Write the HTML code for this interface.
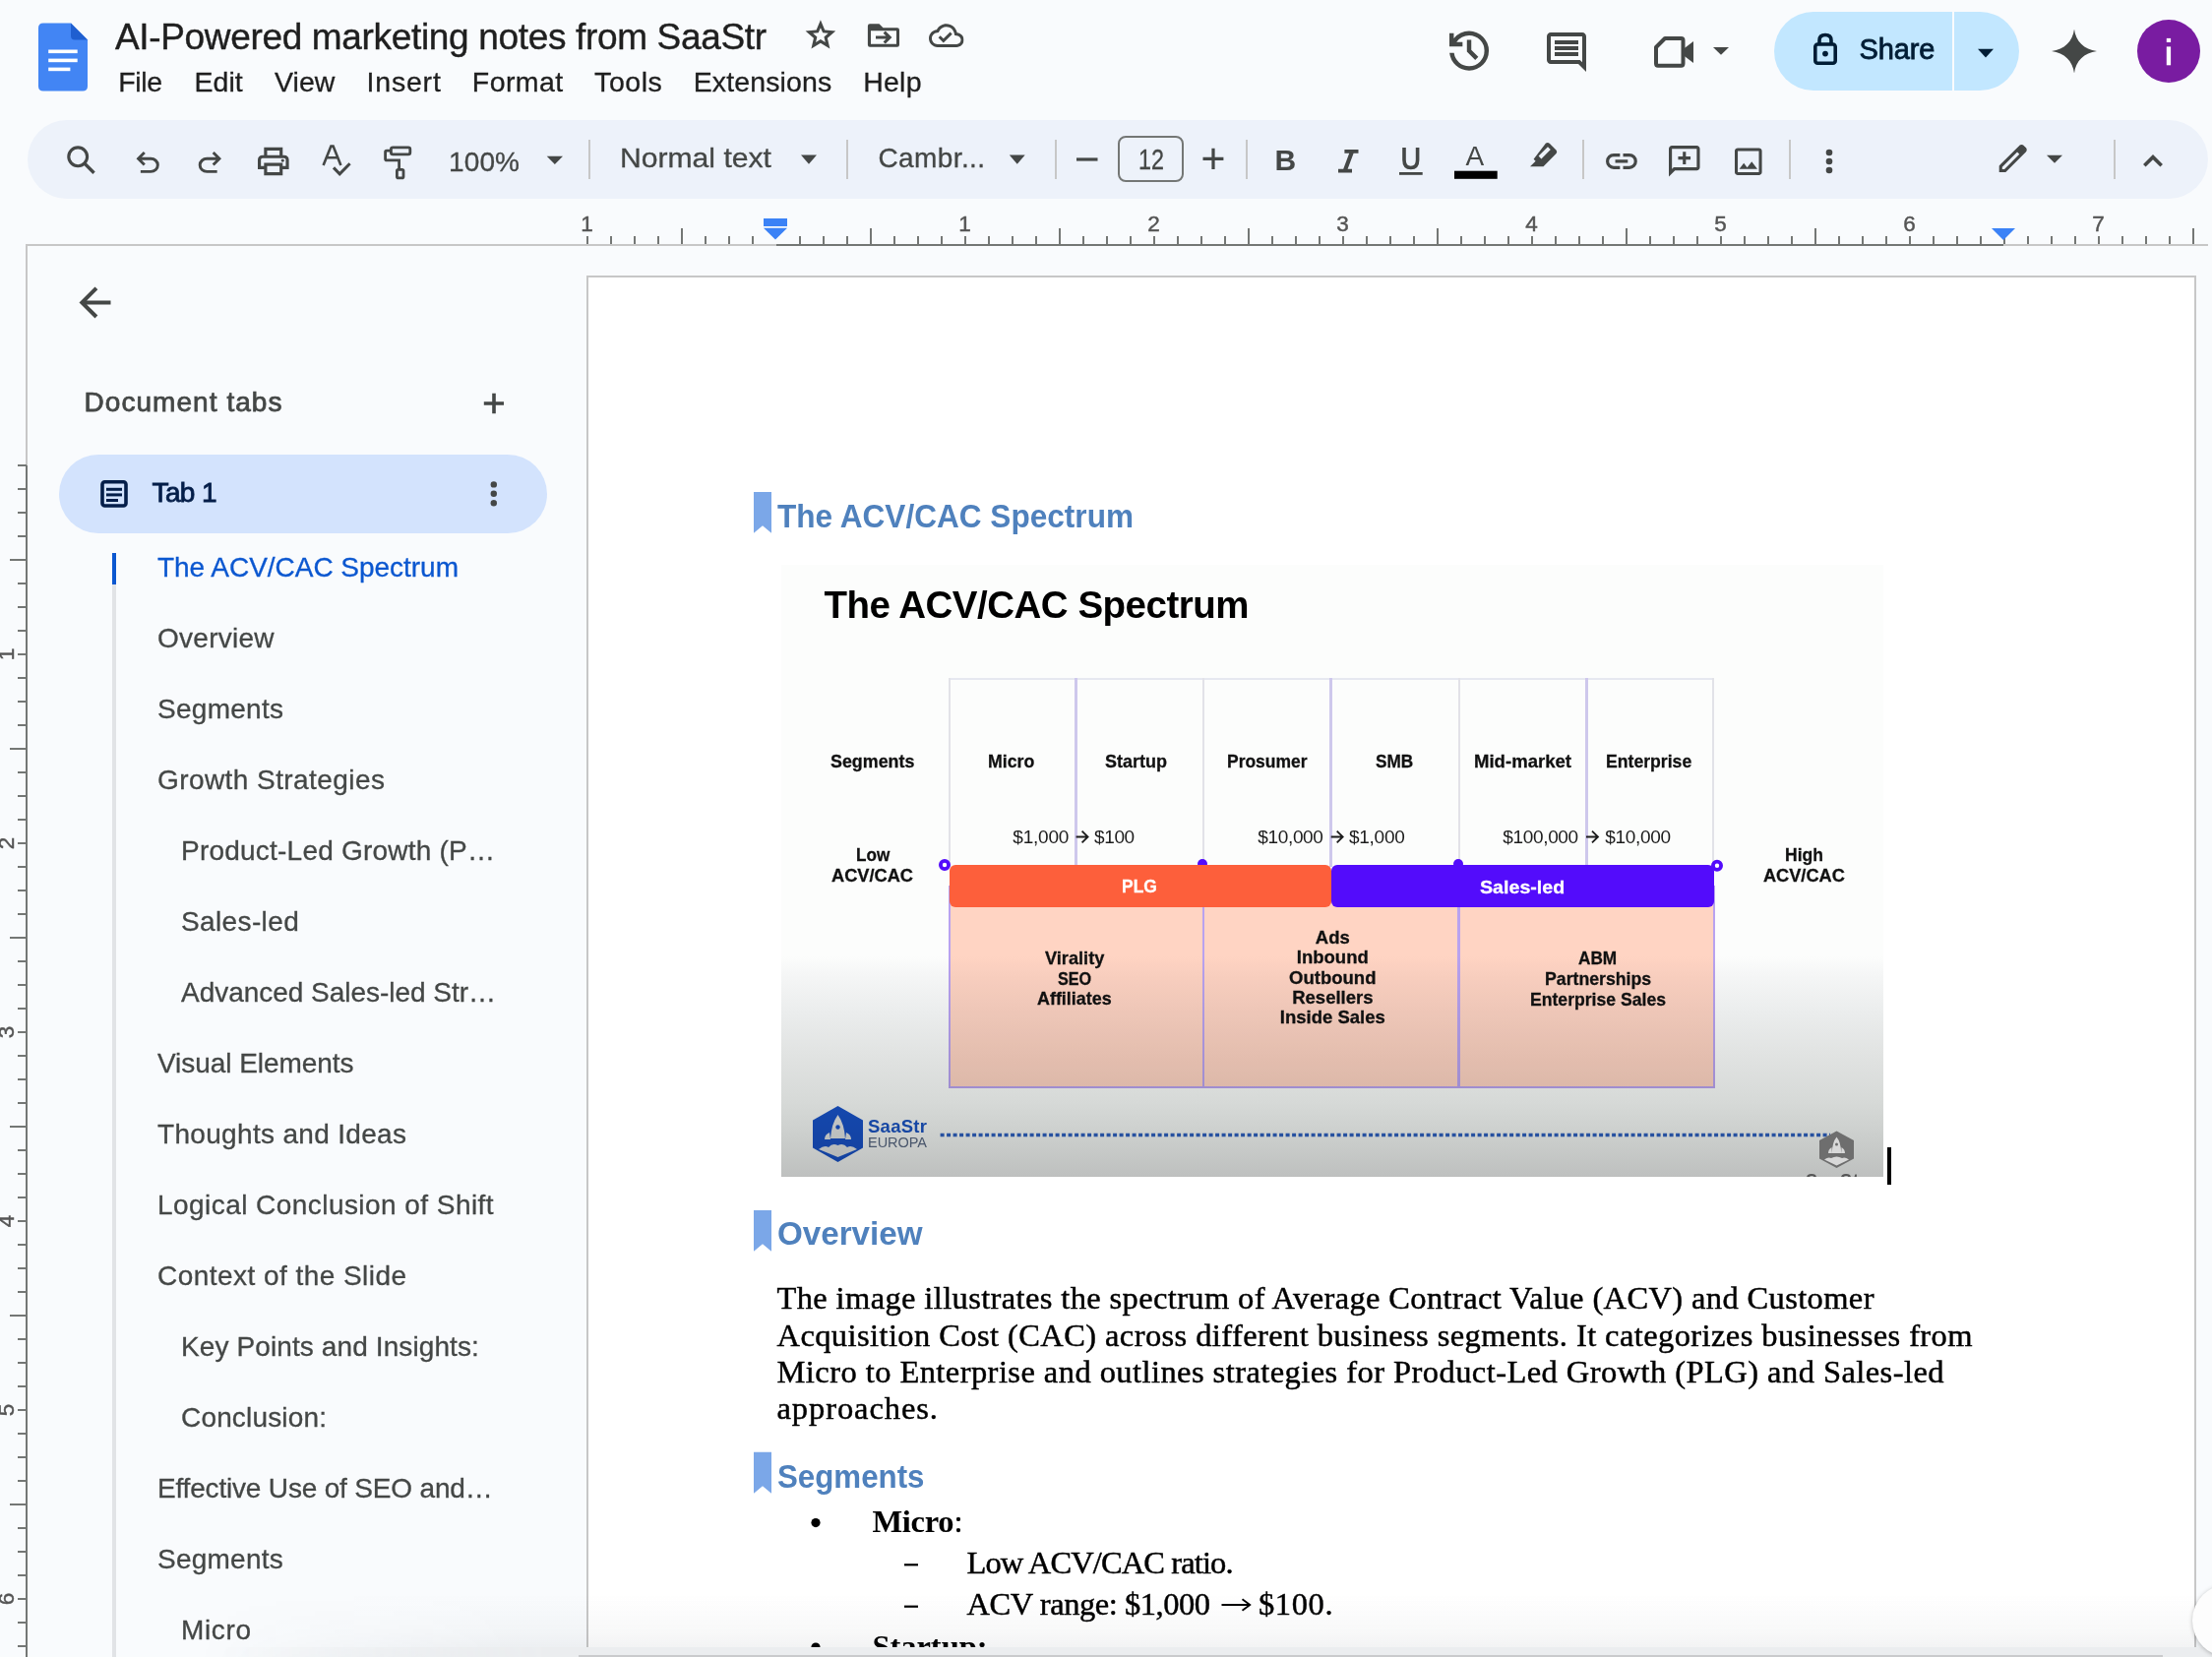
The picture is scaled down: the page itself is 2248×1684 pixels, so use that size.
<!DOCTYPE html>
<html><head><meta charset="utf-8">
<style>
html,body{margin:0;padding:0;}
body{width:2248px;height:1684px;position:relative;overflow:hidden;background:#f9fbfd;font-family:"Liberation Sans",sans-serif;}
.t{position:absolute;white-space:pre;line-height:1;}
.a{position:absolute;}
svg.a{overflow:visible;}
</style></head><body>
<div class=a style='left:1803px;top:12px;width:249px;height:80px;border-radius:40px;background:#c2e7ff'></div>
<div class=a style='left:1984px;top:12px;width:2px;height:80px;background:#f9fbfd'></div>
<div class=a style='left:28px;top:122px;width:2216px;height:80px;border-radius:40px;background:#edf2fa'></div>
<div class=a style='left:598px;top:142px;width:2px;height:40px;background:#c7c7c7'></div>
<div class=a style='left:859.7px;top:142px;width:2px;height:40px;background:#c7c7c7'></div>
<div class=a style='left:1071.8px;top:142px;width:2px;height:40px;background:#c7c7c7'></div>
<div class=a style='left:1265.5px;top:142px;width:2px;height:40px;background:#c7c7c7'></div>
<div class=a style='left:1608px;top:142px;width:2px;height:40px;background:#c7c7c7'></div>
<div class=a style='left:1818px;top:142px;width:2px;height:40px;background:#c7c7c7'></div>
<div class=a style='left:2148px;top:142px;width:2px;height:40px;background:#c7c7c7'></div>
<div class=a style='left:1136.4px;top:138.4px;width:63px;height:43px;border:2px solid #747775;border-radius:8px'></div>
<div class=a style='left:27px;top:247.5px;width:762px;height:2px;background:#c7c7c7'></div>
<div class=a style='left:789px;top:247.5px;width:1247px;height:2px;background:#747775'></div>
<div class=a style='left:2036px;top:247.5px;width:208px;height:2px;background:#c7c7c7'></div>
<div class=a style='left:596px;top:239.8px;width:2px;height:8.699999999999989px;background:#747775'></div>
<div class=a style='left:620px;top:239.8px;width:2px;height:8.699999999999989px;background:#747775'></div>
<div class=a style='left:644px;top:239.8px;width:2px;height:8.699999999999989px;background:#747775'></div>
<div class=a style='left:668px;top:239.8px;width:2px;height:8.699999999999989px;background:#747775'></div>
<div class=a style='left:692px;top:231.8px;width:2px;height:16.69999999999999px;background:#747775'></div>
<div class=a style='left:716px;top:239.8px;width:2px;height:8.699999999999989px;background:#747775'></div>
<div class=a style='left:740px;top:239.8px;width:2px;height:8.699999999999989px;background:#747775'></div>
<div class=a style='left:764px;top:239.8px;width:2px;height:8.699999999999989px;background:#747775'></div>
<div class=a style='left:812px;top:239.8px;width:2px;height:8.699999999999989px;background:#747775'></div>
<div class=a style='left:836px;top:239.8px;width:2px;height:8.699999999999989px;background:#747775'></div>
<div class=a style='left:860px;top:239.8px;width:2px;height:8.699999999999989px;background:#747775'></div>
<div class=a style='left:884px;top:231.8px;width:2px;height:16.69999999999999px;background:#747775'></div>
<div class=a style='left:908px;top:239.8px;width:2px;height:8.699999999999989px;background:#747775'></div>
<div class=a style='left:932px;top:239.8px;width:2px;height:8.699999999999989px;background:#747775'></div>
<div class=a style='left:956px;top:239.8px;width:2px;height:8.699999999999989px;background:#747775'></div>
<div class=a style='left:980px;top:239.8px;width:2px;height:8.699999999999989px;background:#747775'></div>
<div class=a style='left:1004px;top:239.8px;width:2px;height:8.699999999999989px;background:#747775'></div>
<div class=a style='left:1028px;top:239.8px;width:2px;height:8.699999999999989px;background:#747775'></div>
<div class=a style='left:1052px;top:239.8px;width:2px;height:8.699999999999989px;background:#747775'></div>
<div class=a style='left:1076px;top:231.8px;width:2px;height:16.69999999999999px;background:#747775'></div>
<div class=a style='left:1100px;top:239.8px;width:2px;height:8.699999999999989px;background:#747775'></div>
<div class=a style='left:1124px;top:239.8px;width:2px;height:8.699999999999989px;background:#747775'></div>
<div class=a style='left:1148px;top:239.8px;width:2px;height:8.699999999999989px;background:#747775'></div>
<div class=a style='left:1172px;top:239.8px;width:2px;height:8.699999999999989px;background:#747775'></div>
<div class=a style='left:1196px;top:239.8px;width:2px;height:8.699999999999989px;background:#747775'></div>
<div class=a style='left:1220px;top:239.8px;width:2px;height:8.699999999999989px;background:#747775'></div>
<div class=a style='left:1244px;top:239.8px;width:2px;height:8.699999999999989px;background:#747775'></div>
<div class=a style='left:1268px;top:231.8px;width:2px;height:16.69999999999999px;background:#747775'></div>
<div class=a style='left:1292px;top:239.8px;width:2px;height:8.699999999999989px;background:#747775'></div>
<div class=a style='left:1316px;top:239.8px;width:2px;height:8.699999999999989px;background:#747775'></div>
<div class=a style='left:1340px;top:239.8px;width:2px;height:8.699999999999989px;background:#747775'></div>
<div class=a style='left:1364px;top:239.8px;width:2px;height:8.699999999999989px;background:#747775'></div>
<div class=a style='left:1388px;top:239.8px;width:2px;height:8.699999999999989px;background:#747775'></div>
<div class=a style='left:1412px;top:239.8px;width:2px;height:8.699999999999989px;background:#747775'></div>
<div class=a style='left:1436px;top:239.8px;width:2px;height:8.699999999999989px;background:#747775'></div>
<div class=a style='left:1460px;top:231.8px;width:2px;height:16.69999999999999px;background:#747775'></div>
<div class=a style='left:1484px;top:239.8px;width:2px;height:8.699999999999989px;background:#747775'></div>
<div class=a style='left:1508px;top:239.8px;width:2px;height:8.699999999999989px;background:#747775'></div>
<div class=a style='left:1532px;top:239.8px;width:2px;height:8.699999999999989px;background:#747775'></div>
<div class=a style='left:1556px;top:239.8px;width:2px;height:8.699999999999989px;background:#747775'></div>
<div class=a style='left:1580px;top:239.8px;width:2px;height:8.699999999999989px;background:#747775'></div>
<div class=a style='left:1604px;top:239.8px;width:2px;height:8.699999999999989px;background:#747775'></div>
<div class=a style='left:1628px;top:239.8px;width:2px;height:8.699999999999989px;background:#747775'></div>
<div class=a style='left:1652px;top:231.8px;width:2px;height:16.69999999999999px;background:#747775'></div>
<div class=a style='left:1676px;top:239.8px;width:2px;height:8.699999999999989px;background:#747775'></div>
<div class=a style='left:1700px;top:239.8px;width:2px;height:8.699999999999989px;background:#747775'></div>
<div class=a style='left:1724px;top:239.8px;width:2px;height:8.699999999999989px;background:#747775'></div>
<div class=a style='left:1748px;top:239.8px;width:2px;height:8.699999999999989px;background:#747775'></div>
<div class=a style='left:1772px;top:239.8px;width:2px;height:8.699999999999989px;background:#747775'></div>
<div class=a style='left:1796px;top:239.8px;width:2px;height:8.699999999999989px;background:#747775'></div>
<div class=a style='left:1820px;top:239.8px;width:2px;height:8.699999999999989px;background:#747775'></div>
<div class=a style='left:1844px;top:231.8px;width:2px;height:16.69999999999999px;background:#747775'></div>
<div class=a style='left:1868px;top:239.8px;width:2px;height:8.699999999999989px;background:#747775'></div>
<div class=a style='left:1892px;top:239.8px;width:2px;height:8.699999999999989px;background:#747775'></div>
<div class=a style='left:1916px;top:239.8px;width:2px;height:8.699999999999989px;background:#747775'></div>
<div class=a style='left:1940px;top:239.8px;width:2px;height:8.699999999999989px;background:#747775'></div>
<div class=a style='left:1964px;top:239.8px;width:2px;height:8.699999999999989px;background:#747775'></div>
<div class=a style='left:1988px;top:239.8px;width:2px;height:8.699999999999989px;background:#747775'></div>
<div class=a style='left:2012px;top:239.8px;width:2px;height:8.699999999999989px;background:#747775'></div>
<div class=a style='left:2036px;top:231.8px;width:2px;height:16.69999999999999px;background:#747775'></div>
<div class=a style='left:2060px;top:239.8px;width:2px;height:8.699999999999989px;background:#747775'></div>
<div class=a style='left:2084px;top:239.8px;width:2px;height:8.699999999999989px;background:#747775'></div>
<div class=a style='left:2108px;top:239.8px;width:2px;height:8.699999999999989px;background:#747775'></div>
<div class=a style='left:2132px;top:239.8px;width:2px;height:8.699999999999989px;background:#747775'></div>
<div class=a style='left:2156px;top:239.8px;width:2px;height:8.699999999999989px;background:#747775'></div>
<div class=a style='left:2180px;top:239.8px;width:2px;height:8.699999999999989px;background:#747775'></div>
<div class=a style='left:2204px;top:239.8px;width:2px;height:8.699999999999989px;background:#747775'></div>
<div class=a style='left:2228px;top:231.8px;width:2px;height:16.69999999999999px;background:#747775'></div>
<div class=a style='left:776px;top:221.9px;width:24px;height:8px;background:#3b82f6'></div>
<div class=a style='left:26px;top:248px;width:2px;height:225px;background:#c7c7c7'></div>
<div class=a style='left:26px;top:473px;width:2px;height:1211px;background:#747775'></div>
<div class=a style='left:18px;top:472px;width:9px;height:2px;background:#747775'></div>
<div class=a style='left:18px;top:496px;width:9px;height:2px;background:#747775'></div>
<div class=a style='left:18px;top:520px;width:9px;height:2px;background:#747775'></div>
<div class=a style='left:18px;top:544px;width:9px;height:2px;background:#747775'></div>
<div class=a style='left:10px;top:568px;width:17px;height:2px;background:#747775'></div>
<div class=a style='left:18px;top:592px;width:9px;height:2px;background:#747775'></div>
<div class=a style='left:18px;top:616px;width:9px;height:2px;background:#747775'></div>
<div class=a style='left:18px;top:640px;width:9px;height:2px;background:#747775'></div>
<div class=a style='left:18px;top:664px;width:9px;height:2px;background:#747775'></div>
<div class=a style='left:18px;top:688px;width:9px;height:2px;background:#747775'></div>
<div class=a style='left:18px;top:712px;width:9px;height:2px;background:#747775'></div>
<div class=a style='left:18px;top:736px;width:9px;height:2px;background:#747775'></div>
<div class=a style='left:10px;top:760px;width:17px;height:2px;background:#747775'></div>
<div class=a style='left:18px;top:784px;width:9px;height:2px;background:#747775'></div>
<div class=a style='left:18px;top:808px;width:9px;height:2px;background:#747775'></div>
<div class=a style='left:18px;top:832px;width:9px;height:2px;background:#747775'></div>
<div class=a style='left:18px;top:856px;width:9px;height:2px;background:#747775'></div>
<div class=a style='left:18px;top:880px;width:9px;height:2px;background:#747775'></div>
<div class=a style='left:18px;top:904px;width:9px;height:2px;background:#747775'></div>
<div class=a style='left:18px;top:928px;width:9px;height:2px;background:#747775'></div>
<div class=a style='left:10px;top:952px;width:17px;height:2px;background:#747775'></div>
<div class=a style='left:18px;top:976px;width:9px;height:2px;background:#747775'></div>
<div class=a style='left:18px;top:1000px;width:9px;height:2px;background:#747775'></div>
<div class=a style='left:18px;top:1024px;width:9px;height:2px;background:#747775'></div>
<div class=a style='left:18px;top:1048px;width:9px;height:2px;background:#747775'></div>
<div class=a style='left:18px;top:1072px;width:9px;height:2px;background:#747775'></div>
<div class=a style='left:18px;top:1096px;width:9px;height:2px;background:#747775'></div>
<div class=a style='left:18px;top:1120px;width:9px;height:2px;background:#747775'></div>
<div class=a style='left:10px;top:1144px;width:17px;height:2px;background:#747775'></div>
<div class=a style='left:18px;top:1168px;width:9px;height:2px;background:#747775'></div>
<div class=a style='left:18px;top:1192px;width:9px;height:2px;background:#747775'></div>
<div class=a style='left:18px;top:1216px;width:9px;height:2px;background:#747775'></div>
<div class=a style='left:18px;top:1240px;width:9px;height:2px;background:#747775'></div>
<div class=a style='left:18px;top:1264px;width:9px;height:2px;background:#747775'></div>
<div class=a style='left:18px;top:1288px;width:9px;height:2px;background:#747775'></div>
<div class=a style='left:18px;top:1312px;width:9px;height:2px;background:#747775'></div>
<div class=a style='left:10px;top:1336px;width:17px;height:2px;background:#747775'></div>
<div class=a style='left:18px;top:1360px;width:9px;height:2px;background:#747775'></div>
<div class=a style='left:18px;top:1384px;width:9px;height:2px;background:#747775'></div>
<div class=a style='left:18px;top:1408px;width:9px;height:2px;background:#747775'></div>
<div class=a style='left:18px;top:1432px;width:9px;height:2px;background:#747775'></div>
<div class=a style='left:18px;top:1456px;width:9px;height:2px;background:#747775'></div>
<div class=a style='left:18px;top:1480px;width:9px;height:2px;background:#747775'></div>
<div class=a style='left:18px;top:1504px;width:9px;height:2px;background:#747775'></div>
<div class=a style='left:10px;top:1528px;width:17px;height:2px;background:#747775'></div>
<div class=a style='left:18px;top:1552px;width:9px;height:2px;background:#747775'></div>
<div class=a style='left:18px;top:1576px;width:9px;height:2px;background:#747775'></div>
<div class=a style='left:18px;top:1600px;width:9px;height:2px;background:#747775'></div>
<div class=a style='left:18px;top:1624px;width:9px;height:2px;background:#747775'></div>
<div class=a style='left:18px;top:1648px;width:9px;height:2px;background:#747775'></div>
<div class=a style='left:18px;top:1672px;width:9px;height:2px;background:#747775'></div>
<div class=a style='left:18px;top:1696px;width:9px;height:2px;background:#747775'></div>
<div class=t style='left:-4px;top:654px;width:22px;height:22px;text-align:center;font-size:22.5px;color:#555555;-webkit-text-stroke:0.45px #555555;transform:rotate(-90deg)'>1</div>
<div class=t style='left:-4px;top:846px;width:22px;height:22px;text-align:center;font-size:22.5px;color:#555555;-webkit-text-stroke:0.45px #555555;transform:rotate(-90deg)'>2</div>
<div class=t style='left:-4px;top:1038px;width:22px;height:22px;text-align:center;font-size:22.5px;color:#555555;-webkit-text-stroke:0.45px #555555;transform:rotate(-90deg)'>3</div>
<div class=t style='left:-4px;top:1230px;width:22px;height:22px;text-align:center;font-size:22.5px;color:#555555;-webkit-text-stroke:0.45px #555555;transform:rotate(-90deg)'>4</div>
<div class=t style='left:-4px;top:1422px;width:22px;height:22px;text-align:center;font-size:22.5px;color:#555555;-webkit-text-stroke:0.45px #555555;transform:rotate(-90deg)'>5</div>
<div class=t style='left:-4px;top:1614px;width:22px;height:22px;text-align:center;font-size:22.5px;color:#555555;-webkit-text-stroke:0.45px #555555;transform:rotate(-90deg)'>6</div>
<div class=a style='left:60px;top:462px;width:496px;height:80px;border-radius:40px;background:#d3e3fd'></div>
<div class=a style='left:114px;top:594px;width:4px;height:1090px;background:#e1e3e6'></div>
<div class=a style='left:114px;top:562px;width:4px;height:32px;background:#0b57d0'></div>
<svg class=a style='left:0;top:0' width='2248' height='1684'><g transform='translate(39,23.5)'>
<path fill='#4285f4' d='M5,0 H33 L50,17 V64 Q50,69 45,69 H5 Q0,69 0,64 V5 Q0,0 5,0 Z'/>
<path fill='#1f5fd0' d='M33,0 L50,17 H37 Q33,17 33,13 Z'/>
<rect x='10.2' y='27' width='29.5' height='3.6' fill='#fff'/>
<rect x='10.2' y='36.1' width='29.5' height='3.6' fill='#fff'/>
<rect x='10.2' y='45.1' width='22.2' height='3.6' fill='#fff'/>
</g><svg x='815.54' y='17.24' width='36.77' height='36.77' viewBox='0 -960 960 960'><path fill='#444746' d='m354-287 126-76 126 77-33-144 111-96-146-13-58-136-58 135-146 13 111 97-33 143ZM233-120l65-281L80-590l288-25 112-265 112 265 288 25-218 189 65 281-247-149-247 149Zm247-350Z'/></svg><path fill='#444746' d='M884,24.3 H893.5 L897.5,28.3 H911.8 Q914,28.3 914,30.5 V45.6 Q914,47.8 911.8,47.8 H884 Q881.9,47.8 881.9,45.6 V26.5 Q881.9,24.3 884,24.3 Z M885,31.3 V44.8 H911 V31.3 Z'/><path fill='#444746' d='M890,36.6 H900.5 L897.6,33.7 L899.8,31.6 L906.4,38.1 L899.8,44.6 L897.6,42.5 L900.5,39.6 H890 Z'/><svg x='944.00' y='18.38' width='35.52' height='35.52' viewBox='0 0 24 24'><path fill='#444746' d='M19.35 10.04C18.67 6.59 15.64 4 12 4 9.11 4 6.6 5.64 5.35 8.04 2.34 8.36 0 10.91 0 14c0 3.31 2.69 6 6 6h13c2.76 0 5-2.24 5-5 0-2.64-2.05-4.78-4.65-4.96zM19 18H6c-2.21 0-4-1.79-4-4 0-2.05 1.53-3.76 3.56-3.97l1.07-.11.5-.95C8.08 7.14 9.94 6 12 6c2.62 0 4.88 1.86 5.39 4.43l.3 1.5 1.53.11c1.56.1 2.78 1.41 2.78 2.96 0 1.65-1.35 3-3 3zm-9-3.82l-2.09-2.09L6.5 13.5 10 17l6.01-6.01-1.41-1.41z'/></svg><svg x='1466.33' y='24.93' width='53.38' height='53.38' viewBox='0 -960 960 960'><path fill='#444746' d='M480-120q-138 0-240.5-91.5T122-440h82q14 104 92.5 172T480-200q117 0 198.5-81.5T760-480q0-117-81.5-198.5T480-760q-69 0-129 32t-101 88h110v80H120v-240h80v94q51-64 124.5-99T480-840q75 0 140.5 28.5t114 77q48.5 48.5 77 114T840-480q0 75-28.5 140.5t-77 114q-48.5 48.5-114 77T480-120Zm112-192L440-464v-216h80v184l128 128-56 56Z'/></svg><svg x='1568.00' y='29.00' width='48.00' height='48.00' viewBox='0 0 24 24'><path fill='#444746' d='M21.99 4c0-1.1-.89-2-1.99-2H4c-1.1 0-2 .9-2 2v12c0 1.1.9 2 2 2h14l4 4-.01-18zM20 4v13.17L18.83 16H4V4h16zM6 12h12v2H6zm0-3h12v2H6zm0-3h12v2H6z'/></svg><path fill='none' stroke='#444746' stroke-width='4' stroke-linejoin='round' d='M1683,48 L1692,39 H1708.5 Q1710.5,39 1710.5,41 V64.5 Q1710.5,66.7 1708.5,66.7 H1685 Q1683,66.7 1683,64.5 Z'/><path fill='#444746' d='M1710.5,50 L1721,42 V64 L1710.5,56 Z'/><path fill='#444746' d='M1741,48 L1757,48 L1749.0,55.7 Z'/><path fill='none' stroke='#001d35' stroke-width='3.6' d='M1849,45 V41 Q1849,35.5 1855,35.5 Q1861,35.5 1861,41 V45'/><rect x='1844.8' y='45' width='20.4' height='19.2' rx='2.5' fill='none' stroke='#001d35' stroke-width='3.6'/><circle cx='1855' cy='54.6' r='2.9' fill='#001d35'/><path fill='#001d35' d='M2010,49.7 L2026,49.7 L2018.0,58.4 Z'/><path fill='#444746' d='M2108,29.6 C2109.5,42 2118,50.5 2131,52 C2118,53.5 2109.5,62 2108,74.5 C2106.5,62 2098,53.5 2085,52 C2098,50.5 2106.5,42 2108,29.6 Z'/><circle cx='2204' cy='52' r='32' fill='#791ca1'/><rect x='2201.8' y='38.9' width='4.3' height='4.1' fill='#fff'/><rect x='2201.8' y='47.4' width='4.3' height='18.9' fill='#fff'/><circle cx='79.2' cy='159.3' r='9.4' fill='none' stroke='#444746' stroke-width='3.1'/><path d='M86,166.2 L94.4,174.6' stroke='#444746' stroke-width='3.3' stroke-linecap='square'/><svg x='132.68' y='148.18' width='34.94' height='34.94' viewBox='0 -960 960 960'><path fill='#444746' d='M280-200v-80h284q63 0 109.5-40T720-420q0-60-46.5-100T564-560H312l104 104-56 56-200-200 200-200 56 56-104 104h252q97 0 166.5 63T800-420q0 94-69.5 157T564-200H280Z'/></svg><svg x='195.88' y='148.18' width='34.94' height='34.94' viewBox='0 -960 960 960'><path fill='#444746' d='M396-200q-97 0-166.5-63T160-420q0-94 69.5-157T396-640h252L544-744l56-56 200 200-200 200-56-56 104-104H396q-63 0-109.5 40T240-420q0 60 46.5 100T396-280h284v80H396Z'/></svg><svg x='258.84' y='145.06' width='37.92' height='37.92' viewBox='0 -960 960 960'><path fill='#444746' d='M640-640v-120H320v120h-80v-200h480v200h-80Zm-480 80h640-640Zm560 100q17 0 28.5-11.5T760-500q0-17-11.5-28.5T720-540q-17 0-28.5 11.5T680-500q0 17 11.5 28.5T720-460Zm-80 260v-160H320v160h320Zm80 80H240v-160H80v-240q0-51 35-85.5t85-34.5h560q51 0 85.5 34.5T880-520v240H720v160Zm80-240v-160q0-17-11.5-28.5T760-560H200q-17 0-28.5 11.5T160-520v160h80v-80h480v80h80Z'/></svg><path fill='none' stroke='#444746' stroke-width='2.6' stroke-linejoin='miter' d='M328.6,168 L336.4,148.6 H338.6 L346.4,168 M331.8,160.3 H343.2'/><path fill='none' stroke='#444746' stroke-width='3' d='M339,170.4 L345.2,176.8 L355.6,166.2'/><rect x='397.4' y='149.8' width='19.4' height='7' rx='1.8' fill='none' stroke='#444746' stroke-width='2.8'/><path fill='none' stroke='#444746' stroke-width='2.8' d='M397.4,153.2 H393 Q391.6,153.2 391.6,154.6 V161.4 Q391.6,162.8 393,162.8 H405.6 V171.6'/><rect x='403.4' y='172.4' width='6.6' height='8.4' rx='1.4' fill='none' stroke='#444746' stroke-width='2.8'/><path fill='#444746' d='M555.7,158.8 L572,158.8 L563.85,167 Z'/><path fill='#444746' d='M814,157.5 L830,157.5 L822.0,166.7 Z'/><path fill='#444746' d='M1025.8,157.5 L1041.7,157.5 L1033.75,166.7 Z'/><path d='M1094,162 H1115.5' stroke='#444746' stroke-width='3.2'/><path d='M1222.5,161.4 H1243.4 M1233,150.8 V172' stroke='#444746' stroke-width='3.2'/><path fill='#444746' d='M1366.4,152 H1380.5 V155.8 H1375.6 L1369.6,171.8 H1374 V175.6 H1360 V171.8 H1365.2 L1371.2,155.8 H1366.4 Z'/><path fill='none' stroke='#444746' stroke-width='3.6' d='M1427,150 V162.5 Q1427,170.5 1433.8,170.5 Q1440.6,170.5 1440.6,162.5 V150'/><rect x='1422' y='175' width='23.7' height='2.8' fill='#444746'/><rect x='1478' y='173.7' width='43.7' height='8.1' fill='#000'/><path fill='#444746' d='M1571,145.6 Q1573,144.2 1575,146 L1581.5,152.4 Q1583,154.3 1581.6,156 L1568.5,169.2 H1555 L1560.6,163.8 L1558.6,161.7 Z M1563.6,158.6 L1566.4,161.4 L1575.8,152 L1573,149.2 Z'/><svg x='1628.82' y='144.86' width='38.21' height='38.21' viewBox='0 -960 960 960'><path fill='#444746' d='M440-280H280q-83 0-141.5-58.5T80-480q0-83 58.5-141.5T280-680h160v80H280q-50 0-85 35t-35 85q0 50 35 85t85 35h160v80ZM320-440v-80h320v80H320Zm200 160v-80h160q50 0 85-35t35-85q0-50-35-85t-85-35H520v-80h160q83 0 141.5 58.5T880-480q0 83-58.5 141.5T680-280H520Z'/></svg><svg x='1692.85' y='144.85' width='37.82' height='37.82' viewBox='0 -960 960 960'><path fill='#444746' d='M440-400h80v-120h120v-80H520v-120h-80v120H320v80h120v120ZM80-80v-720q0-33 23.5-56.5T160-880h640q33 0 56.5 23.5T880-800v480q0 33-23.5 56.5T800-240H240L80-80Zm126-240h594v-480H160v525l46-45Zm-46 0v-480 480Z'/></svg><svg x='1758.40' y='145.80' width='36.77' height='36.77' viewBox='0 -960 960 960'><path fill='#444746' d='M200-120q-33 0-56.5-23.5T120-200v-560q0-33 23.5-56.5T200-840h560q33 0 56.5 23.5T840-760v560q0 33-23.5 56.5T760-120H200Zm0-80h560v-560H200v560Zm40-80h480L570-480 450-320l-90-120-120 160Zm-40 80v-560 560Z'/></svg><circle cx='1859' cy='155' r='3.3' fill='#444746'/><circle cx='1859' cy='164' r='3.3' fill='#444746'/><circle cx='1859' cy='173' r='3.3' fill='#444746'/><svg x='2027.03' y='142.33' width='37.34' height='37.34' viewBox='0 -960 960 960'><path fill='#444746' d='M200-200h57l391-391-57-57-391 391v57Zm-80 80v-170l528-527q12-11 26.5-17t30.5-6q16 0 31 6t26 18l55 56q12 11 17.5 26t5.5 30q0 16-5.5 30.5T817-647L290-120H120Zm640-584-56-56 56 56Zm-141 85-28-29 57 57-29-28Z'/></svg><path fill='#444746' d='M2080,157.7 L2096,157.7 L2088.0,165.8 Z'/><path fill='none' stroke='#444746' stroke-width='3.6' d='M2179.3,168.2 L2188,159.6 L2196.7,168.2'/><path fill='#3b82f6' d='M776,231.8 H800 L788,243.6 Z'/><path fill='#3b82f6' d='M2024,232 H2048 L2036,244 Z'/><svg x='72.50' y='283.40' width='48.00' height='48.00' viewBox='0 -960 960 960'><path fill='#444746' d='m313-440 224 224-57 56-320-320 320-320 57 56-224 224h487v80H313Z'/></svg><path d='M491.8,410 H512 M502,399.8 V420.2' stroke='#444746' stroke-width='3.6'/><rect x='104' y='489.8' width='24' height='24.2' rx='2.5' fill='none' stroke='#041e49' stroke-width='3.6'/><rect x='108' y='495.8' width='16' height='3' fill='#041e49'/><rect x='108' y='501.4' width='16' height='3' fill='#041e49'/><rect x='108' y='507' width='12' height='3' fill='#041e49'/><circle cx='501.8' cy='492.4' r='3.2' fill='#444746'/><circle cx='501.8' cy='501.8' r='3.2' fill='#444746'/><circle cx='501.8' cy='511.3' r='3.2' fill='#444746'/></svg>
<div class=a style='left:596px;top:280px;width:1636px;height:1394px;border-bottom:none !important;box-sizing:border-box;background:#fff;border:2px solid #c7c7c7'></div>
<svg class=a style='left:0;top:0' width='2248' height='1684'><path fill='#7ba7e8' d='M766,500 H784 V541.7 L775,534.2 L766,541.7 Z'/><path fill='#7ba7e8' d='M766,1230 H784 V1271.7 L775,1264.2 L766,1271.7 Z'/><path fill='#7ba7e8' d='M766,1475.8 H784 V1517.8 L775,1510.3 L766,1517.8 Z'/><circle cx='829' cy='1547.6' r='4.6' fill='#000'/><rect x='919' y='1589.2' width='14' height='2.2' fill='#000'/><rect x='919' y='1631.6' width='14' height='2.2' fill='#000'/><path d='M1241.5,1631 H1269.5 M1262.5,1625.2 L1270.3,1631 L1262.5,1636.8' fill='none' stroke='#000' stroke-width='1.8'/><circle cx='829' cy='1674' r='4.6' fill='#000'/><rect x='1918' y='1166' width='4' height='38' fill='#000'/></svg>
<div class=a style='left:794px;top:574px;width:1120px;height:622px;background:#fcfdfc'></div>
<div class=a style='left:964px;top:689px;width:778px;height:2px;background:#e6e8f0'></div>
<div class=a style='left:963.5px;top:689px;width:2px;height:192px;background:#e2e2e8'></div>
<div class=a style='left:1221.6px;top:689px;width:2px;height:192px;background:#e2e2e8'></div>
<div class=a style='left:1481.5px;top:689px;width:2px;height:192px;background:#e2e2e8'></div>
<div class=a style='left:1740px;top:689px;width:2px;height:192px;background:#e2e2e8'></div>
<div class=a style='left:1091.5px;top:689px;width:3px;height:192px;background:#cec8ec'></div>
<div class=a style='left:1350.5px;top:689px;width:3px;height:192px;background:#cec8ec'></div>
<div class=a style='left:1611.2px;top:689px;width:3px;height:192px;background:#cec8ec'></div>
<div class=a style='left:963.5px;top:900px;width:260.0999999999999px;height:205.70000000000005px;box-sizing:border-box;background:#ffd4c3;border:2px solid #b9a2ef'></div>
<div class=a style='left:1221.6px;top:900px;width:261.9000000000001px;height:205.70000000000005px;box-sizing:border-box;background:#ffd4c3;border:2px solid #b9a2ef'></div>
<div class=a style='left:1481.5px;top:900px;width:261.0px;height:205.70000000000005px;box-sizing:border-box;background:#ffd4c3;border:2px solid #b9a2ef'></div>
<svg class=a style='left:0;top:0' width='2248' height='1684'><circle cx='1222' cy='878' r='5' fill='#530cfb'/><circle cx='1482' cy='878' r='5' fill='#530cfb'/></svg>
<div class=a style='left:965px;top:879px;width:388px;height:43px;border-radius:6px;background:#fd5f3b'></div>
<div class=a style='left:1352.5px;top:878.7px;width:389px;height:43.3px;border-radius:6px;background:#530cfb'></div>
<div class=a style='left:1820px;top:1180px;width:94px;height:16px;overflow:hidden'><div class=t style='left:15px;top:11px;font-size:18px;font-weight:700;color:#707070;letter-spacing:1px'>SaaStr</div></div>
<svg class=a style='left:0;top:0' width='2248' height='1684'><circle cx='960' cy='879' r='4.1' fill='#fff' stroke='#530cfb' stroke-width='3.8'/><circle cx='1745' cy='879.7' r='4.1' fill='#fff' stroke='#530cfb' stroke-width='3.8'/><path fill='#1853cc' d='M851.5,1124 L877,1138.5 V1166.5 L851.5,1181 L826,1166.5 V1138.5 Z'/><path fill='#e8eaea' d='M851.5,1133 Q858,1142 859,1157 H844 Q845,1142 851.5,1133 Z M843,1151 Q838,1153 838,1158 H844 Z M860,1151 Q865,1153 865,1158 H859 Z M832,1168 Q838,1163 842,1166 Q846,1161 851.5,1164 Q857,1161 861,1166 Q865,1163 871,1168 L851.5,1176 Z'/><circle cx='851.5' cy='1145.5' r='2.2' fill='#1853cc'/><path d='M955.6,1153.5 H1860' stroke='#2f63c4' stroke-width='3.4' stroke-dasharray='4 2.5'/><path d='M1093.6,850.5 H1105.1 M1099.6,844.6 L1105.6,850.5 L1099.6,856.4' fill='none' stroke='#1c1c1c' stroke-width='1.8'/><path d='M1352.7,850.5 H1364.2 M1358.7,844.6 L1364.7,850.5 L1358.7,856.4' fill='none' stroke='#1c1c1c' stroke-width='1.8'/><path d='M1612,850.5 H1623.5 M1618,844.6 L1624,850.5 L1618,856.4' fill='none' stroke='#1c1c1c' stroke-width='1.8'/></svg>
<div class=t style='left:117.0px;top:18.7px;font-family:"Liberation Sans";font-size:37px;font-weight:400;color:#1f1f1f;letter-spacing:-0.338px;-webkit-text-stroke:0.4px #1f1f1f;'>AI-Powered marketing notes from SaaStr</div>
<div class=t style='left:120.3px;top:68.9px;font-family:"Liberation Sans";font-size:28.5px;font-weight:400;color:#1f1f1f;letter-spacing:-0.412px;-webkit-text-stroke:0.3px #1f1f1f;'>File</div>
<div class=t style='left:197.4px;top:68.9px;font-family:"Liberation Sans";font-size:28.5px;font-weight:400;color:#1f1f1f;letter-spacing:0.092px;-webkit-text-stroke:0.3px #1f1f1f;'>Edit</div>
<div class=t style='left:279.0px;top:68.9px;font-family:"Liberation Sans";font-size:28.5px;font-weight:400;color:#1f1f1f;letter-spacing:0.045px;-webkit-text-stroke:0.3px #1f1f1f;'>View</div>
<div class=t style='left:372.5px;top:68.9px;font-family:"Liberation Sans";font-size:28.5px;font-weight:400;color:#1f1f1f;letter-spacing:0.804px;-webkit-text-stroke:0.3px #1f1f1f;'>Insert</div>
<div class=t style='left:479.8px;top:68.9px;font-family:"Liberation Sans";font-size:28.5px;font-weight:400;color:#1f1f1f;letter-spacing:0.427px;-webkit-text-stroke:0.3px #1f1f1f;'>Format</div>
<div class=t style='left:604.1px;top:68.9px;font-family:"Liberation Sans";font-size:28.5px;font-weight:400;color:#1f1f1f;letter-spacing:0.538px;-webkit-text-stroke:0.3px #1f1f1f;'>Tools</div>
<div class=t style='left:704.7px;top:68.9px;font-family:"Liberation Sans";font-size:28.5px;font-weight:400;color:#1f1f1f;letter-spacing:0.131px;-webkit-text-stroke:0.3px #1f1f1f;'>Extensions</div>
<div class=t style='left:877.2px;top:68.9px;font-family:"Liberation Sans";font-size:28.5px;font-weight:400;color:#1f1f1f;letter-spacing:0.225px;-webkit-text-stroke:0.3px #1f1f1f;'>Help</div>
<div class=t style='left:1889.5px;top:36.4px;font-family:"Liberation Sans";font-size:29px;font-weight:400;color:#001d35;letter-spacing:-0.098px;-webkit-text-stroke:0.8px #001d35;'>Share</div>
<div class=t style='left:456.0px;top:150.5px;font-family:"Liberation Sans";font-size:28px;font-weight:400;color:#444746;letter-spacing:0.125px;-webkit-text-stroke:0.3px #444746;'>100%</div>
<div class=t style='left:630.0px;top:147.0px;font-family:"Liberation Sans";font-size:28px;font-weight:400;color:#444746;transform-origin:0 0;transform:scaleX(1.0757);-webkit-text-stroke:0.3px #444746;'>Normal text</div>
<div class=t style='left:892.5px;top:147.0px;font-family:"Liberation Sans";font-size:28px;font-weight:400;color:#444746;letter-spacing:0.384px;-webkit-text-stroke:0.3px #444746;'>Cambr...</div>
<div class=t style='left:1156.5px;top:147.7px;font-family:"Liberation Sans";font-size:29px;font-weight:400;color:#444746;transform-origin:0 0;transform:scaleX(0.8058);-webkit-text-stroke:0.3px #444746;'>12</div>
<div class=t style='left:1295.5px;top:148.4px;font-family:"Liberation Sans";font-size:30px;font-weight:700;color:#444746;'>B</div>
<div class=t style='left:1489.5px;top:145.1px;font-family:"Liberation Sans";font-size:28px;font-weight:400;color:#444746;'>A</div>
<div class=t style='left:590.2px;top:217.1px;font-family:"Liberation Sans";font-size:22.5px;font-weight:400;color:#555555;-webkit-text-stroke:0.45px #555555;'>1</div>
<div class=t style='left:974.2px;top:217.1px;font-family:"Liberation Sans";font-size:22.5px;font-weight:400;color:#555555;-webkit-text-stroke:0.45px #555555;'>1</div>
<div class=t style='left:1166.2px;top:217.1px;font-family:"Liberation Sans";font-size:22.5px;font-weight:400;color:#555555;-webkit-text-stroke:0.45px #555555;'>2</div>
<div class=t style='left:1358.2px;top:217.1px;font-family:"Liberation Sans";font-size:22.5px;font-weight:400;color:#555555;-webkit-text-stroke:0.45px #555555;'>3</div>
<div class=t style='left:1550.2px;top:217.1px;font-family:"Liberation Sans";font-size:22.5px;font-weight:400;color:#555555;-webkit-text-stroke:0.45px #555555;'>4</div>
<div class=t style='left:1742.2px;top:217.1px;font-family:"Liberation Sans";font-size:22.5px;font-weight:400;color:#555555;-webkit-text-stroke:0.45px #555555;'>5</div>
<div class=t style='left:1934.2px;top:217.1px;font-family:"Liberation Sans";font-size:22.5px;font-weight:400;color:#555555;-webkit-text-stroke:0.45px #555555;'>6</div>
<div class=t style='left:2126.2px;top:217.1px;font-family:"Liberation Sans";font-size:22.5px;font-weight:400;color:#555555;-webkit-text-stroke:0.45px #555555;'>7</div>
<div class=t style='left:85.5px;top:395.1px;font-family:"Liberation Sans";font-size:28px;font-weight:400;color:#444746;letter-spacing:1.056px;-webkit-text-stroke:0.75px #444746;'>Document tabs</div>
<div class=t style='left:154.5px;top:486.8px;font-family:"Liberation Sans";font-size:28px;font-weight:400;color:#041e49;letter-spacing:-0.625px;-webkit-text-stroke:0.8px #041e49;'>Tab 1</div>
<div class=t style='left:160.0px;top:563.3px;font-family:"Liberation Sans";font-size:28px;font-weight:400;color:#0b57d0;letter-spacing:-0.030px;-webkit-text-stroke:0.3px #0b57d0;'>The ACV/CAC Spectrum</div>
<div class=t style='left:160.0px;top:635.3px;font-family:"Liberation Sans";font-size:28px;font-weight:400;color:#444746;letter-spacing:0.271px;-webkit-text-stroke:0.3px #444746;'>Overview</div>
<div class=t style='left:160.0px;top:707.3px;font-family:"Liberation Sans";font-size:28px;font-weight:400;color:#444746;letter-spacing:0.275px;-webkit-text-stroke:0.3px #444746;'>Segments</div>
<div class=t style='left:160.0px;top:779.3px;font-family:"Liberation Sans";font-size:28px;font-weight:400;color:#444746;letter-spacing:0.431px;-webkit-text-stroke:0.3px #444746;'>Growth Strategies</div>
<div class=t style='left:184.0px;top:851.3px;font-family:"Liberation Sans";font-size:28px;font-weight:400;color:#444746;letter-spacing:0.222px;-webkit-text-stroke:0.3px #444746;'>Product-Led Growth (P&#8230;</div>
<div class=t style='left:184.0px;top:923.3px;font-family:"Liberation Sans";font-size:28px;font-weight:400;color:#444746;letter-spacing:0.371px;-webkit-text-stroke:0.3px #444746;'>Sales-led</div>
<div class=t style='left:184.0px;top:995.3px;font-family:"Liberation Sans";font-size:28px;font-weight:400;color:#444746;letter-spacing:-0.028px;-webkit-text-stroke:0.3px #444746;'>Advanced Sales-led Str&#8230;</div>
<div class=t style='left:160.0px;top:1067.3px;font-family:"Liberation Sans";font-size:28px;font-weight:400;color:#444746;letter-spacing:-0.048px;-webkit-text-stroke:0.3px #444746;'>Visual Elements</div>
<div class=t style='left:160.0px;top:1139.3px;font-family:"Liberation Sans";font-size:28px;font-weight:400;color:#444746;letter-spacing:0.323px;-webkit-text-stroke:0.3px #444746;'>Thoughts and Ideas</div>
<div class=t style='left:160.0px;top:1211.3px;font-family:"Liberation Sans";font-size:28px;font-weight:400;color:#444746;letter-spacing:0.447px;-webkit-text-stroke:0.3px #444746;'>Logical Conclusion of Shift</div>
<div class=t style='left:160.0px;top:1283.3px;font-family:"Liberation Sans";font-size:28px;font-weight:400;color:#444746;letter-spacing:0.454px;-webkit-text-stroke:0.3px #444746;'>Context of the Slide</div>
<div class=t style='left:184.0px;top:1355.3px;font-family:"Liberation Sans";font-size:28px;font-weight:400;color:#444746;letter-spacing:0.108px;-webkit-text-stroke:0.3px #444746;'>Key Points and Insights:</div>
<div class=t style='left:184.0px;top:1427.3px;font-family:"Liberation Sans";font-size:28px;font-weight:400;color:#444746;letter-spacing:0.169px;-webkit-text-stroke:0.3px #444746;'>Conclusion:</div>
<div class=t style='left:160.0px;top:1499.3px;font-family:"Liberation Sans";font-size:28px;font-weight:400;color:#444746;letter-spacing:-0.179px;-webkit-text-stroke:0.3px #444746;'>Effective Use of SEO and&#8230;</div>
<div class=t style='left:160.0px;top:1571.3px;font-family:"Liberation Sans";font-size:28px;font-weight:400;color:#444746;letter-spacing:0.232px;-webkit-text-stroke:0.3px #444746;'>Segments</div>
<div class=t style='left:184.0px;top:1643.3px;font-family:"Liberation Sans";font-size:28px;font-weight:400;color:#444746;letter-spacing:0.637px;-webkit-text-stroke:0.3px #444746;'>Micro</div>
<div class=t style='left:789.5px;top:508.2px;font-family:"Liberation Sans";font-size:33.5px;font-weight:700;color:#4f81bd;transform-origin:0 0;transform:scaleX(0.9426);'>The ACV/CAC Spectrum</div>
<div class=t style='left:790.0px;top:1237.4px;font-family:"Liberation Sans";font-size:33.5px;font-weight:700;color:#4f81bd;transform-origin:0 0;transform:scaleX(0.9900);'>Overview</div>
<div class=t style='left:790.0px;top:1484.2px;font-family:"Liberation Sans";font-size:33.5px;font-weight:700;color:#4f81bd;transform-origin:0 0;transform:scaleX(0.9337);'>Segments</div>
<div class=t style='left:789.5px;top:1302.8px;font-family:"Liberation Serif";font-size:32.5px;font-weight:400;color:#000;letter-spacing:0.367px;-webkit-text-stroke:0.45px #000;'>The image illustrates the spectrum of Average Contract Value (ACV) and Customer</div>
<div class=t style='left:789.5px;top:1341.0px;font-family:"Liberation Serif";font-size:32.5px;font-weight:400;color:#000;letter-spacing:0.408px;-webkit-text-stroke:0.45px #000;'>Acquisition Cost (CAC) across different business segments. It categorizes businesses from</div>
<div class=t style='left:789.5px;top:1378.0px;font-family:"Liberation Serif";font-size:32.5px;font-weight:400;color:#000;letter-spacing:0.436px;-webkit-text-stroke:0.45px #000;'>Micro to Enterprise and outlines strategies for Product-Led Growth (PLG) and Sales-led</div>
<div class=t style='left:789.5px;top:1415.2px;font-family:"Liberation Serif";font-size:32.5px;font-weight:400;color:#000;letter-spacing:0.920px;-webkit-text-stroke:0.45px #000;'>approaches.</div>
<div class=t style='left:886.5px;top:1529.8px;font-family:"Liberation Serif";font-size:32.5px;font-weight:700;color:#000;letter-spacing:-0.305px;'>Micro</div>
<div class=t style='left:969.5px;top:1529.8px;font-family:"Liberation Serif";font-size:32.5px;font-weight:400;color:#000;-webkit-text-stroke:0.45px #000;'>:</div>
<div class=t style='left:982.5px;top:1571.8px;font-family:"Liberation Serif";font-size:32.5px;font-weight:400;color:#000;letter-spacing:-0.893px;-webkit-text-stroke:0.45px #000;'>Low ACV/CAC ratio.</div>
<div class=t style='left:982.5px;top:1614.2px;font-family:"Liberation Serif";font-size:32.5px;font-weight:400;color:#000;letter-spacing:-0.460px;-webkit-text-stroke:0.45px #000;'>ACV range: $1,000</div>
<div class=t style='left:1279.0px;top:1614.2px;font-family:"Liberation Serif";font-size:32.5px;font-weight:400;color:#000;letter-spacing:0.594px;-webkit-text-stroke:0.45px #000;'>$100.</div>
<div class=t style='left:886.5px;top:1656.6px;font-family:"Liberation Serif";font-size:32.5px;font-weight:700;color:#000;letter-spacing:-0.054px;'>Startup:</div>
<div class=t style='left:882.0px;top:1135.8px;font-family:"Liberation Sans";font-size:18.5px;font-weight:700;color:#1a55c6;letter-spacing:0.275px;'>SaaStr</div>
<div class=t style='left:882.0px;top:1154.1px;font-family:"Liberation Sans";font-size:14.5px;font-weight:400;color:#5b6b86;letter-spacing:-0.034px;'>EUROPA</div>
<div class=t style='left:837.5px;top:596.0px;font-family:"Liberation Sans";font-size:38.5px;font-weight:700;color:#000;letter-spacing:-0.494px;'>The ACV/CAC Spectrum</div>
<div class=t style='left:843.6px;top:764.2px;font-family:"Liberation Sans";font-size:19px;font-weight:700;color:#111;transform-origin:0 0;transform:scaleX(0.9404);-webkit-text-stroke:0.3px #111;'>Segments</div>
<div class=t style='left:1004.4px;top:764.2px;font-family:"Liberation Sans";font-size:19px;font-weight:700;color:#111;transform-origin:0 0;transform:scaleX(0.9332);-webkit-text-stroke:0.3px #111;'>Micro</div>
<div class=t style='left:1122.5px;top:764.2px;font-family:"Liberation Sans";font-size:19px;font-weight:700;color:#111;transform-origin:0 0;transform:scaleX(0.9459);-webkit-text-stroke:0.3px #111;'>Startup</div>
<div class=t style='left:1247.2px;top:764.2px;font-family:"Liberation Sans";font-size:19px;font-weight:700;color:#111;transform-origin:0 0;transform:scaleX(0.9188);-webkit-text-stroke:0.3px #111;'>Prosumer</div>
<div class=t style='left:1397.5px;top:764.2px;font-family:"Liberation Sans";font-size:19px;font-weight:700;color:#111;transform-origin:0 0;transform:scaleX(0.9045);-webkit-text-stroke:0.3px #111;'>SMB</div>
<div class=t style='left:1498.3px;top:764.2px;font-family:"Liberation Sans";font-size:19px;font-weight:700;color:#111;transform-origin:0 0;transform:scaleX(0.9767);-webkit-text-stroke:0.3px #111;'>Mid-market</div>
<div class=t style='left:1632.4px;top:764.2px;font-family:"Liberation Sans";font-size:19px;font-weight:700;color:#111;transform-origin:0 0;transform:scaleX(0.9278);-webkit-text-stroke:0.3px #111;'>Enterprise</div>
<div class=t style='left:1029.3px;top:840.9px;font-family:"Liberation Sans";font-size:19px;font-weight:400;color:#1c1c1c;letter-spacing:-0.205px;'>$1,000</div>
<div class=t style='left:1112.0px;top:840.9px;font-family:"Liberation Sans";font-size:19px;font-weight:400;color:#1c1c1c;letter-spacing:-0.360px;'>$100</div>
<div class=t style='left:1278.3px;top:840.9px;font-family:"Liberation Sans";font-size:19px;font-weight:400;color:#1c1c1c;letter-spacing:-0.348px;'>$10,000</div>
<div class=t style='left:1371.0px;top:840.9px;font-family:"Liberation Sans";font-size:19px;font-weight:400;color:#1c1c1c;letter-spacing:-0.265px;'>$1,000</div>
<div class=t style='left:1527.2px;top:840.9px;font-family:"Liberation Sans";font-size:19px;font-weight:400;color:#1c1c1c;letter-spacing:-0.321px;'>$100,000</div>
<div class=t style='left:1631.3px;top:840.9px;font-family:"Liberation Sans";font-size:19px;font-weight:400;color:#1c1c1c;letter-spacing:-0.298px;'>$10,000</div>
<div class=t style='left:869.5px;top:858.9px;font-family:"Liberation Sans";font-size:19px;font-weight:700;color:#111;transform-origin:0 0;transform:scaleX(0.9000);-webkit-text-stroke:0.3px #111;'>Low</div>
<div class=t style='left:845.1px;top:879.6px;font-family:"Liberation Sans";font-size:19px;font-weight:700;color:#111;transform-origin:0 0;transform:scaleX(0.9588);-webkit-text-stroke:0.3px #111;'>ACV/CAC</div>
<div class=t style='left:1814.0px;top:858.9px;font-family:"Liberation Sans";font-size:19px;font-weight:700;color:#111;transform-origin:0 0;transform:scaleX(0.9214);-webkit-text-stroke:0.3px #111;'>High</div>
<div class=t style='left:1792.0px;top:879.5px;font-family:"Liberation Sans";font-size:19px;font-weight:700;color:#111;transform-origin:0 0;transform:scaleX(0.9565);-webkit-text-stroke:0.3px #111;'>ACV/CAC</div>
<div class=t style='left:1140.0px;top:890.9px;font-family:"Liberation Sans";font-size:19px;font-weight:700;color:#fff;transform-origin:0 0;transform:scaleX(0.9190);-webkit-text-stroke:0.3px #fff;'>PLG</div>
<div class=t style='left:1503.9px;top:891.7px;font-family:"Liberation Sans";font-size:19px;font-weight:700;color:#fff;transform-origin:0 0;transform:scaleX(1.0331);-webkit-text-stroke:0.3px #fff;'>Sales-led</div>
<div class=t style='left:1061.8px;top:965.3px;font-family:"Liberation Sans";font-size:18.5px;font-weight:700;color:#111;transform-origin:0 0;transform:scaleX(0.9825);-webkit-text-stroke:0.3px #111;'>Virality</div>
<div class=t style='left:1074.9px;top:985.9px;font-family:"Liberation Sans";font-size:18.5px;font-weight:700;color:#111;transform-origin:0 0;transform:scaleX(0.8752);-webkit-text-stroke:0.3px #111;'>SEO</div>
<div class=t style='left:1054.2px;top:1006.1px;font-family:"Liberation Sans";font-size:18.5px;font-weight:700;color:#111;transform-origin:0 0;transform:scaleX(0.9675);-webkit-text-stroke:0.3px #111;'>Affiliates</div>
<div class=t style='left:1336.8px;top:943.5px;font-family:"Liberation Sans";font-size:18.5px;font-weight:700;color:#111;-webkit-text-stroke:0.3px #111;'>Ads</div>
<div class=t style='left:1317.8px;top:964.3px;font-family:"Liberation Sans";font-size:18.5px;font-weight:700;color:#111;-webkit-text-stroke:0.3px #111;'>Inbound</div>
<div class=t style='left:1310.1px;top:984.9px;font-family:"Liberation Sans";font-size:18.5px;font-weight:700;color:#111;-webkit-text-stroke:0.3px #111;'>Outbound</div>
<div class=t style='left:1313.2px;top:1005.3px;font-family:"Liberation Sans";font-size:18.5px;font-weight:700;color:#111;-webkit-text-stroke:0.3px #111;'>Resellers</div>
<div class=t style='left:1300.8px;top:1025.3px;font-family:"Liberation Sans";font-size:18.5px;font-weight:700;color:#111;-webkit-text-stroke:0.3px #111;'>Inside Sales</div>
<div class=t style='left:1604.2px;top:965.3px;font-family:"Liberation Sans";font-size:18.5px;font-weight:700;color:#111;transform-origin:0 0;transform:scaleX(0.9302);-webkit-text-stroke:0.3px #111;'>ABM</div>
<div class=t style='left:1569.7px;top:985.7px;font-family:"Liberation Sans";font-size:18.5px;font-weight:700;color:#111;transform-origin:0 0;transform:scaleX(0.9566);-webkit-text-stroke:0.3px #111;'>Partnerships</div>
<div class=t style='left:1554.8px;top:1006.7px;font-family:"Liberation Sans";font-size:18.5px;font-weight:700;color:#111;transform-origin:0 0;transform:scaleX(0.9517);-webkit-text-stroke:0.3px #111;'>Enterprise Sales</div>
<div class=a style='left:794px;top:574px;width:1120px;height:622px;mix-blend-mode:multiply;background:linear-gradient(to bottom,#ffffff 0%,#ffffff 64%,#f8f8f9 67%,#eeeff0 73%,#e4e5e5 80%,#d9dbda 88%,#cdcfce 94%,#c1c2c2 100%)'></div>
<svg class=a style='left:0;top:0' width='2248' height='1684'><path fill='#6e6e6e' d='M1866.5,1149.5 L1884,1159 V1177.5 L1866.5,1187 L1849,1177.5 V1159 Z'/><path fill='#d8d8d8' d='M1866.5,1155.5 Q1871,1161 1871.2,1172 H1861.8 Q1862,1161 1866.5,1155.5 Z M1861.5,1166 Q1858,1168 1858,1172 H1861.8 Z M1871.5,1166 Q1875,1168 1875,1172 H1871.2 Z M1854,1178.5 Q1858,1175.5 1861,1177 Q1866.5,1174 1872,1177 Q1875,1175.5 1879,1178.5 L1866.5,1184.5 Z'/><circle cx='1866.5' cy='1163' r='1.5' fill='#6e6e6e'/></svg>
<div class=a style='left:0px;top:1620px;width:2248px;height:64px;background:linear-gradient(to bottom,rgba(40,50,60,0) 0%,rgba(40,50,60,0.03) 60%,rgba(40,50,60,0.075) 100%);-webkit-mask-image:linear-gradient(to right,transparent 200px,#000 520px)'></div>
<div class=a style='left:0px;top:1673.5px;width:2248px;height:10.5px;background:#ebedef;-webkit-mask-image:linear-gradient(to right,transparent 220px,#000 560px)'></div>
<div class=a style='left:588px;top:1681.5px;width:1610px;height:2.5px;background:#c9cacc'></div>
<div class=a style='left:2228px;top:1610px;width:74px;height:74px;border-radius:50%;background:#fdfdfd;box-shadow:0 1px 4px rgba(0,0,0,0.25)'></div>
</body></html>
